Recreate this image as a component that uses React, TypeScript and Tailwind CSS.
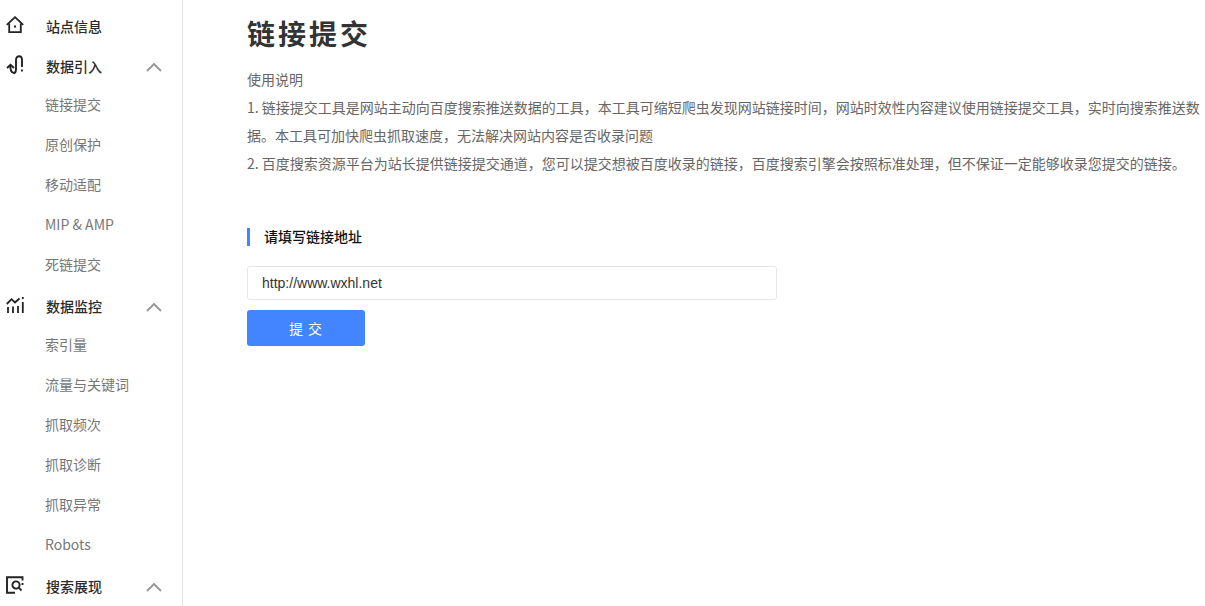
import React from "react";

const font = "font-['Microsoft_YaHei','Noto_Sans_CJK_SC','Noto_Sans',sans-serif]";

function Chevron() {
  return (
    <svg width="16" height="9" viewBox="0 0 16 9" fill="none" stroke="#9a9a9a" strokeWidth="2">
      <path d="M1 8 L8 1 L15 8" />
    </svg>
  );
}

const HomeIcon = () => (
  <svg width="18" height="18" viewBox="0 0 18 18" fill="none" stroke="#222222" strokeWidth="1.8">
    <path d="M0.8 8.8 L9 1.2 L17.2 8.8" />
    <path d="M3.2 7.5 V16.2 H14.8 V7.5" />
    <path d="M8 10.5 H10" />
  </svg>
);
const ImportIcon = () => (
  <svg width="18" height="20" viewBox="0 0 18 20" fill="none" stroke="#222222" strokeWidth="1.9">
    <path d="M1 13 L4.5 9.8 L8 13" />
    <path d="M4.5 10.5 C3.8 14.5 5.5 18 8 18 C9.5 18 10 16 10 14 V5 C10 2.5 11.5 1.2 13.2 1.2 C15 1.2 16 2.5 16 5 V12" />
    <path d="M16 14.5 V16.5" />
  </svg>
);
const MonitorIcon = () => (
  <svg width="18" height="18" viewBox="0 0 18 18" fill="none" stroke="#222222" strokeWidth="1.8">
    <path d="M0.8 8 L5.5 3.2 L9 6.5 L13.5 2.5" />
    <path d="M2 11 V17 M7 10.5 V17 M12 10 V17 M16.8 6 V17" />
    <path d="M16.8 1 V3" />
  </svg>
);
const SearchIcon = () => (
  <svg width="18" height="18" viewBox="0 0 18 18" fill="none" stroke="#222222" strokeWidth="1.9">
    <path d="M16.5 4.5 V1.2 H1 V16.8 H9" />
    <circle cx="10" cy="9" r="3.6" />
    <path d="M12.7 11.7 L15.5 14.5" />
    <path d="M16.5 7 V9" />
  </svg>
);

const groups: { icon: React.ReactNode; title: string; chevron?: boolean; items: string[] }[] = [
  { icon: <HomeIcon />, title: "站点信息", items: [] },
  { icon: <ImportIcon />, title: "数据引入", chevron: true, items: ["链接提交", "原创保护", "移动适配", "MIP & AMP", "死链提交"] },
  { icon: <MonitorIcon />, title: "数据监控", chevron: true, items: ["索引量", "流量与关键词", "抓取频次", "抓取诊断", "抓取异常", "Robots"] },
  { icon: <SearchIcon />, title: "搜索展现", chevron: true, items: [] },
];

export default function App() {
  return (
    <div className={`flex h-[606px] w-[1205px] overflow-hidden bg-white ${font}`}>
      <aside className="h-full w-[183px] shrink-0 border-r border-[#e8e8e8] pt-[7px]">
        {groups.map((g) => (
          <div key={g.title} className={g.items.length ? "pb-[2px]" : ""}>
            <div className={`flex h-10 items-center pl-[6px] pr-5 ${g.items.length ? "-mb-[2px]" : ""}`}>
              <span className="flex w-[18px] justify-center pb-[4px]">{g.icon}</span>
              <span className="ml-[22px] flex-1 pb-[2px] text-[14px] font-medium text-[#2b2b2b]">{g.title}</span>
              {g.chevron && <Chevron />}
            </div>
            {g.items.map((it) => (
              <div key={it} className="flex h-10 items-center pb-[2px] pl-[45px] text-[14px] text-[#777777]">
                {it}
              </div>
            ))}
          </div>
        ))}
      </aside>
      <main className="flex-1 pl-[64px]">
        <h1 className="mt-[13px] text-[28px] font-bold leading-[40px] tracking-[3px] text-[#333333]">链接提交</h1>
        <div className="mt-[12px] w-[958px] text-[14px] leading-[28px] text-[#666666]">
          <p>使用说明</p>
          <p>
            1. 链接提交工具是网站主动向百度搜索推送数据的工具，本工具可缩短爬虫发现网站链接时间，网站时效性内容建议使用链接提交工具，实时向搜索推送数据。本工具可加快爬虫抓取速度，无法解决网站内容是否收录问题
          </p>
          <p>
            2. 百度搜索资源平台为站长提供链接提交通道，您可以提交想被百度收录的链接，百度搜索引擎会按照标准处理，但不保证一定能够收录您提交的链接。
          </p>
        </div>
        <div className="mt-[51px] flex h-[18px] items-center border-l-[3px] border-[#4285ff] pb-[1px] pl-[14px] text-[14px] font-medium text-[#111111]">
          请填写链接地址
        </div>
        <div className="mt-[20px] flex h-[34px] w-[530px] items-center rounded-[3px] border border-[#e6e6e6] pl-[14px] font-['Liberation_Sans',sans-serif] text-[14px] text-[#333333]">
          http://www.wxhl.net
        </div>
        <button className="mt-[10px] flex h-9 w-[118px] items-center justify-center rounded-[3px] bg-[#4285ff] text-[14px] tracking-[1px] text-white">
          提 交
        </button>
      </main>
    </div>
  );
}
